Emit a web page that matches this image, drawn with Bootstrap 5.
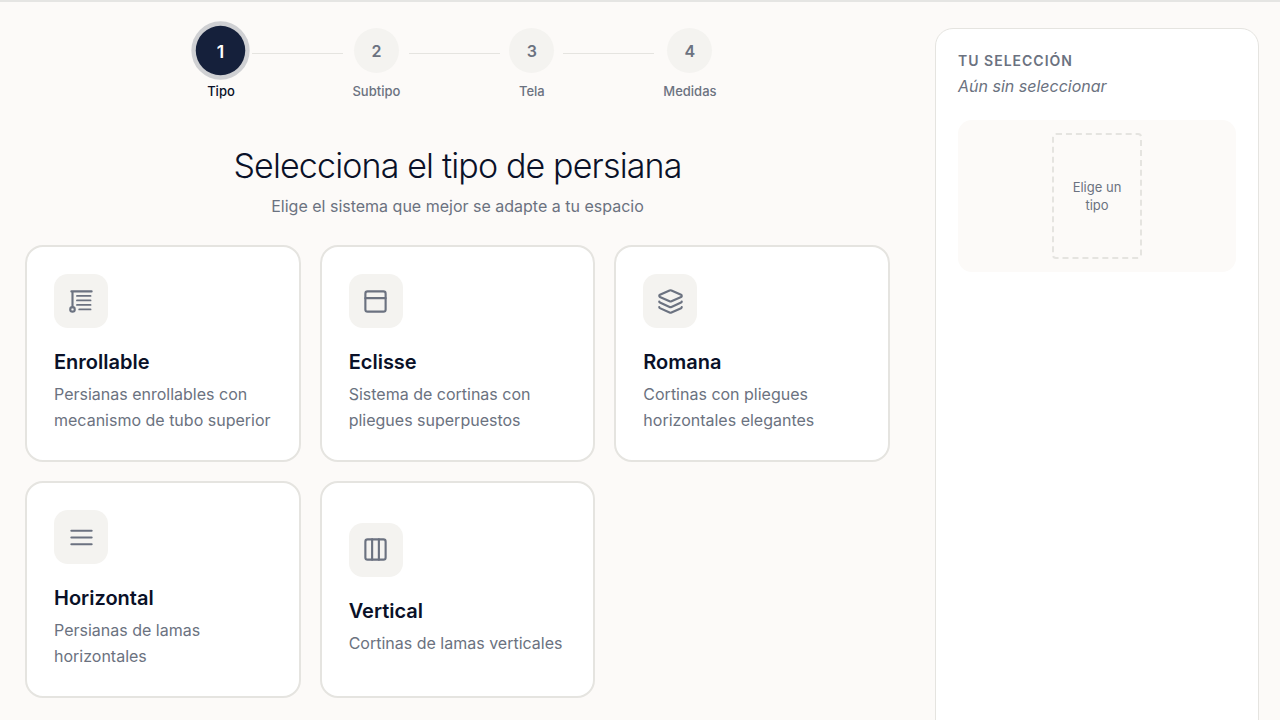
<!DOCTYPE html>
<html lang="es">
<head>
<meta charset="utf-8">
<meta name="viewport" content="width=device-width, initial-scale=1">
<title>Configurador de persianas</title>
<link href="https://cdn.jsdelivr.net/npm/bootstrap@5.3.0/dist/css/bootstrap.min.css" rel="stylesheet">
<style>
  :root { --ink: #0a1128; --navy: #15203b; --muted: #6b7280; --line: #e5e4e0; --paper: #fcfaf8; --sand: #f4f3f0; }
  body { font-family: Inter, "Liberation Sans", sans-serif; background: var(--paper); color: var(--ink); font-size: 16px; line-height: 1.5; }
  .page-shell { min-height: 100vh; border-top: 2px solid #e5e5e3; padding: 26px 21px 22px; gap: 41px; }
  .chooser { padding: 0 4px; min-width: 0; }
  .muted { color: var(--muted); }

  .steps { gap: 9px; }
  .step-item { min-width: 45px; gap: 9px; font-size: 13px; line-height: 18px; font-weight: 500; color: var(--muted); }
  .step-dot { width: 45px; height: 45px; border-radius: 50%; background: var(--sand); font-size: 16px; font-weight: 600; }
  .step-item.current { color: var(--ink); }
  .step-item.current .step-dot { background: var(--navy); color: #fff; transform: scale(1.1); box-shadow: 0 0 0 4px #cfd0d3; }
  .step-line { width: 91px; height: 1px; background: var(--line); margin-bottom: 22px; }

  .page-title { font-size: 34px; line-height: 40px; font-weight: 300; letter-spacing: -0.025em; margin: 46px 0 8px; }
  .page-sub { font-size: 16px; line-height: 24px; margin-bottom: 27px; }

  .type-grid { display: grid; grid-template-columns: repeat(3, minmax(0, 1fr)); gap: 19px; }
  .type-card { background: #fff; border: 2px solid var(--line); border-radius: 18px; padding: 27px; color: inherit; }
  .type-card:hover { border-color: #c9c8c4; }
  .type-icon { width: 54px; height: 54px; border-radius: 14px; background: var(--sand); color: var(--muted); margin-bottom: 20px; }
  .type-icon svg { width: 27px; height: 27px; fill: none; stroke: currentColor; stroke-width: 1.9; stroke-linecap: round; stroke-linejoin: round; }
  .type-name { font-size: 20px; line-height: 28px; font-weight: 600; margin-bottom: 6px; }
  .type-text { font-size: 16px; line-height: 1.6; color: var(--muted); }

  .summary { width: 324px; flex: none; background: #fff; border: 1px solid var(--line); border-radius: 18px; padding: 22px; min-height: 100vh; }
  .summary-title { font-size: 14px; line-height: 20px; font-weight: 600; letter-spacing: 1px; margin-bottom: 3px; }
  .summary-empty { font-size: 16px; line-height: 24px; margin-bottom: 22px; }
  .preview { background: var(--paper); border-radius: 14px; padding: 13px; }
  .preview-slot { width: 90px; height: 126px; border: 2px dashed var(--line); border-radius: 4px; font-size: 13px; line-height: 18px; padding: 0 9px; }
  @media (max-width: 991px) {
    .page-shell { flex-direction: column; }
    .summary { width: 100%; min-height: 0; }
    .type-grid { grid-template-columns: repeat(auto-fill, minmax(240px, 1fr)); }
    .step-line { width: 24px; }
  }
</style>
</head>
<body>
<div class="page-shell d-flex">
  <main class="chooser flex-grow-1">
    <nav class="steps d-flex justify-content-center align-items-center" aria-label="Pasos">
      <div class="step-item current d-flex flex-column align-items-center" aria-current="step"><span class="step-dot d-flex align-items-center justify-content-center">1</span><span>Tipo</span></div>
      <div class="step-line"></div>
      <div class="step-item d-flex flex-column align-items-center"><span class="step-dot d-flex align-items-center justify-content-center">2</span><span>Subtipo</span></div>
      <div class="step-line"></div>
      <div class="step-item d-flex flex-column align-items-center"><span class="step-dot d-flex align-items-center justify-content-center">3</span><span>Tela</span></div>
      <div class="step-line"></div>
      <div class="step-item d-flex flex-column align-items-center"><span class="step-dot d-flex align-items-center justify-content-center">4</span><span>Medidas</span></div>
    </nav>

    <h1 class="page-title text-center">Selecciona el tipo de persiana</h1>
    <p class="page-sub muted text-center">Elige el sistema que mejor se adapte a tu espacio</p>

    <div class="type-grid">
      <button type="button" class="type-card text-start">
        <span class="type-icon d-flex align-items-center justify-content-center"><svg viewBox="0 0 24 24" aria-hidden="true"><path d="M3 3h18M4 3v14"/><path d="M8 7h12M8 11h12M8 15h12M10 19h10" stroke-width="1.7"/><circle cx="4" cy="19" r="2"/></svg></span>
        <span class="type-name d-block">Enrollable</span>
        <span class="type-text d-block">Persianas enrollables con mecanismo de tubo superior</span>
      </button>
      <button type="button" class="type-card text-start">
        <span class="type-icon d-flex align-items-center justify-content-center"><svg viewBox="0 0 24 24" aria-hidden="true"><rect x="3" y="3" width="18" height="18" rx="2"/><path d="M3 9h18"/></svg></span>
        <span class="type-name d-block">Eclisse</span>
        <span class="type-text d-block">Sistema de cortinas con pliegues superpuestos</span>
      </button>
      <button type="button" class="type-card text-start">
        <span class="type-icon d-flex align-items-center justify-content-center"><svg viewBox="0 0 24 24" aria-hidden="true"><path d="M12.830 2.180a2 2 0 0 0-1.660 0L2.600 6.080a1 1 0 0 0 0 1.830l8.580 3.910a2 2 0 0 0 1.660 0l8.580-3.900a1 1 0 0 0 0-1.830z"/><path d="M2 12a1 1 0 0 0 .58.910l8.600 3.910a2 2 0 0 0 1.650 0l8.580-3.900A1 1 0 0 0 22 12"/><path d="M2 17a1 1 0 0 0 .58.910l8.600 3.910a2 2 0 0 0 1.650 0l8.580-3.900A1 1 0 0 0 22 17"/></svg></span>
        <span class="type-name d-block">Romana</span>
        <span class="type-text d-block">Cortinas con pliegues horizontales elegantes</span>
      </button>
      <button type="button" class="type-card text-start">
        <span class="type-icon d-flex align-items-center justify-content-center"><svg viewBox="0 0 24 24" aria-hidden="true"><path d="M3 6h18M3 12h18M3 18h18"/></svg></span>
        <span class="type-name d-block">Horizontal</span>
        <span class="type-text d-block">Persianas de lamas horizontales</span>
      </button>
      <button type="button" class="type-card text-start">
        <span class="type-icon d-flex align-items-center justify-content-center"><svg viewBox="0 0 24 24" aria-hidden="true"><rect x="3" y="3" width="18" height="18" rx="2"/><path d="M9 3v18M15 3v18"/></svg></span>
        <span class="type-name d-block">Vertical</span>
        <span class="type-text d-block">Cortinas de lamas verticales</span>
      </button>
    </div>
  </main>

  <aside class="summary">
    <h2 class="summary-title muted text-uppercase">Tu selección</h2>
    <p class="summary-empty muted fst-italic">Aún sin seleccionar</p>
    <div class="preview d-flex justify-content-center">
      <div class="preview-slot muted d-flex align-items-center justify-content-center text-center">Elige un tipo</div>
    </div>
  </aside>
</div>
<script src="https://cdn.jsdelivr.net/npm/bootstrap@5.3.0/dist/js/bootstrap.bundle.min.js"></script>
</body>
</html>
